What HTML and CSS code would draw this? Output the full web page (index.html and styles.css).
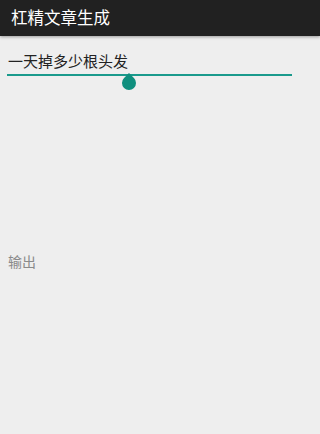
FILE: index.html
```html
<!DOCTYPE html>
<html>
<head>
<meta charset="utf-8">
<link rel="stylesheet" href="styles.css">
</head>
<body>
<div class="appbar"><span class="title">杠精文章生成</span></div>
<div class="content">
  <div class="field">
    <div class="input-text">一天掉多少根头发</div>
    <div class="underline"></div>
    <div class="handle"></div>
  </div>
  <div class="output">输出</div>
</div>
</body>
</html>
```
FILE: styles.css
```css
html, body {
  margin: 0;
  padding: 0;
  height: 434px;
  background: #eeeeee;
  font-family: "Noto Sans CJK SC", "Noto Sans", sans-serif;
  overflow: hidden;
}
.appbar {
  height: 36px;
  background: #212121;
  display: flex;
  align-items: center;
  padding-left: 11px;
  box-shadow: 0 1px 3px rgba(0,0,0,0.35);
  position: relative;
  z-index: 1;
}
.title {
  color: #ffffff;
  font-size: 16.5px;
  line-height: 20px;
  margin-top: -3px;
}
.content {
  padding: 0 8px;
}
.field {
  position: relative;
  margin-top: 14px;
  width: 285px;
}
.input-text {
  font-size: 15px;
  line-height: 22px;
  color: #222222;
}
.underline {
  height: 2px;
  background: #1a9a8c;
  margin: 2px 0 0 -1px;
  width: 285px;
}
.handle {
  position: absolute;
  left: 114px;
  top: 26px;
  width: 14px;
  height: 14px;
  background: #0f8f7e;
  border-radius: 0 50% 50% 50%;
  transform: rotate(45deg);
}
.output {
  margin-top: 175px;
  font-size: 14px;
  line-height: 20px;
  color: #8a8a8a;
}
```
